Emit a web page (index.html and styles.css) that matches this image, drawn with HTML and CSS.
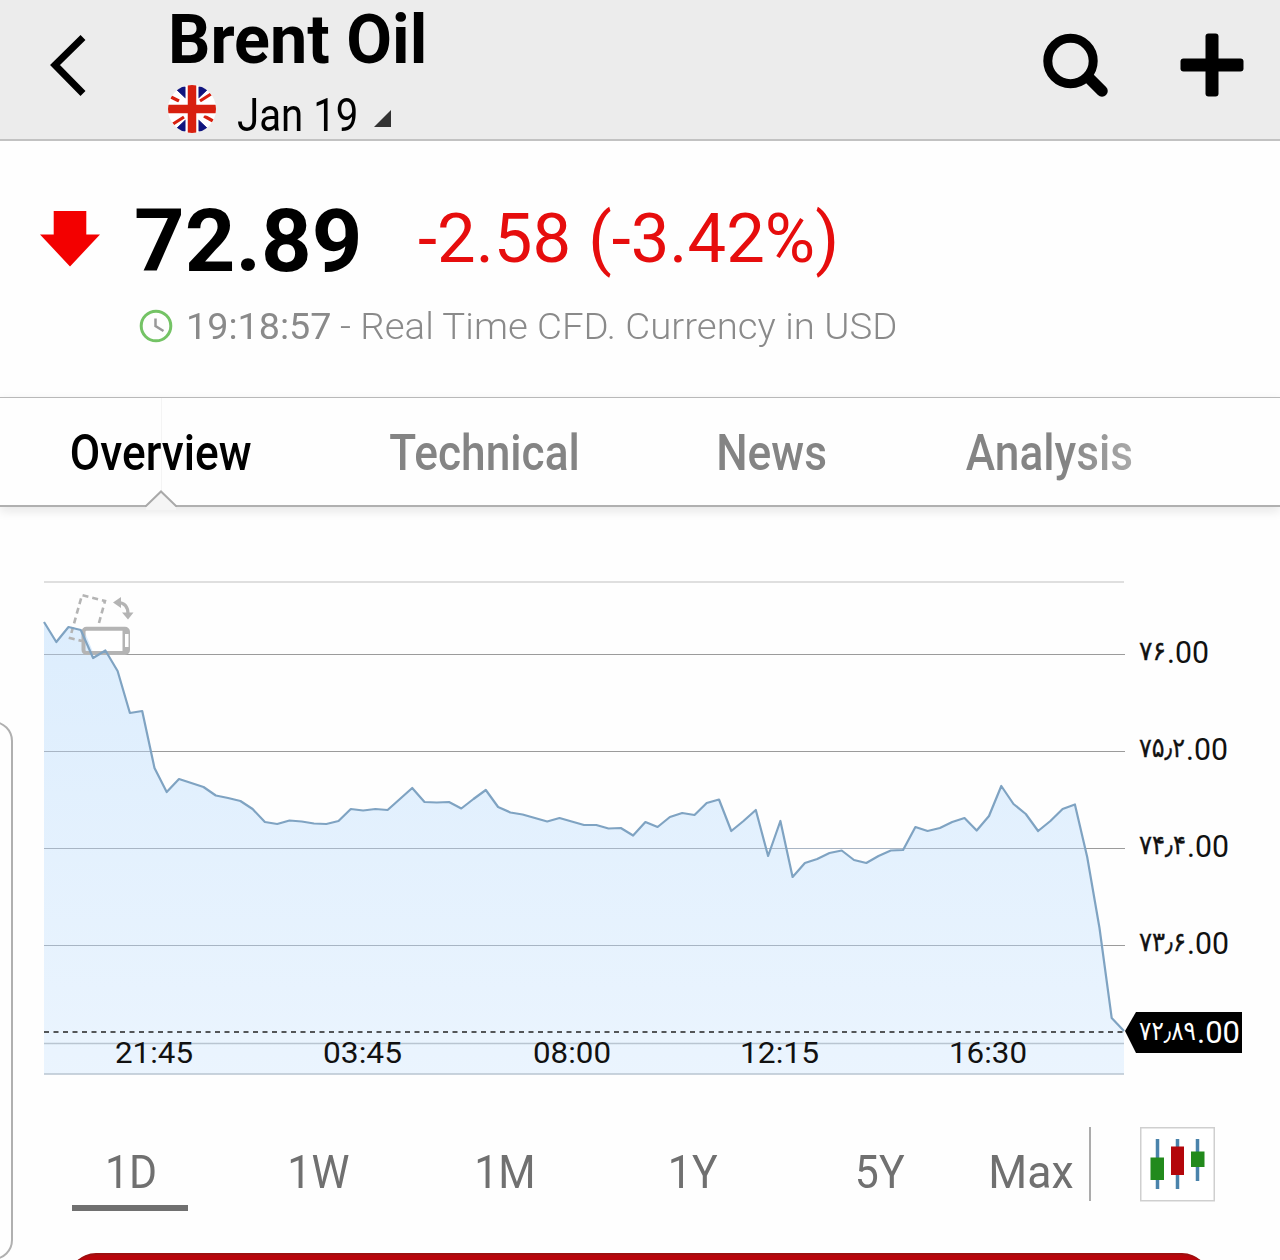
FILE: index.html
```html
<!DOCTYPE html>
<html lang="en">
<head>
    <meta charset="UTF-8">
    <meta name="viewport" content="width=device-width, initial-scale=1.0">
    <title>Brent Oil</title>
    <link rel="stylesheet" href="styles.css">
</head>
<body>
    <header class="topbar">
        <svg class="back" width="40" height="64" viewBox="0 0 40 64">
            <path d="M34 4.5 L6 32 L34 60.5" fill="none" stroke="#000" stroke-width="7"/>
        </svg>
        <div class="title">
            <h1><span class="name">Brent Oil</span></h1>
            <div class="contract">
                <svg class="flag" width="48" height="48" viewBox="0 0 48 48">
                    <clipPath id="round"><circle cx="24" cy="24" r="24"/></clipPath>
                    <g clip-path="url(#round)">
                        <rect width="48" height="48" fill="#fff"/>
                        <path d="M6 2 H17.5 V13 Z M42 2 H30.5 V13 Z M6 46 H17.5 V35 Z M42 46 H30.5 V35 Z" fill="#10157e" stroke="#10157e"/>
                        <path d="M3 12 L11 16 M45 36 L36 31 M43 9 L32 16 M5 39 L16 32" stroke="#d8200f" stroke-width="3.2"/>
                        <path d="M24 0 V48 M0 24 H48" stroke="#fff" stroke-width="13"/>
                        <path d="M24 0 V48 M0 24 H48" stroke="#d8200f" stroke-width="8.5"/>
                    </g>
                </svg>
                <span class="month">Jan 19</span>
                <svg class="corner" width="17" height="17" viewBox="0 0 17 17"><path d="M17 0 V17 H0 Z" fill="#333"/></svg>
            </div>
        </div>
        <svg class="search" width="66" height="66" viewBox="0 0 66 66">
            <circle cx="27.5" cy="28" r="22.7" fill="none" stroke="#000" stroke-width="9"/>
            <path d="M46 45 L59 58" stroke="#000" stroke-width="11.5" stroke-linecap="round"/>
        </svg>
        <svg class="plus" width="64" height="64" viewBox="0 0 64 64">
            <rect x="25.5" y="0.5" width="13" height="63" rx="3"/>
            <rect x="0.5" y="25.5" width="63" height="13" rx="3"/>
        </svg>
    </header>

    <section class="quote">
        <div class="price-row">
            <svg class="arrow" width="60" height="56" viewBox="0 0 60 56"><path d="M13.7 0 H46.3 V23.5 H60 L30 55.5 L0 23.5 H13.7 Z" fill="#f30000"/></svg>
            <span class="price">72.89</span>
            <span class="change">-2.58 (-3.42%)</span>
        </div>
        <div class="info-row">
            <svg class="clock" width="34" height="34" viewBox="0 0 34 34">
                <circle cx="17" cy="17" r="14.8" fill="none" stroke="#74c365" stroke-width="3"/>
                <path d="M16.5 9.5 V17 L24.5 22" fill="none" stroke="#999" stroke-width="2.5"/>
            </svg>
            <span class="time">19:18:57</span>
            <span class="note">- Real Time CFD. Currency in USD</span>
        </div>
    </section>

    <nav class="tabs">
        <a class="tab overview active"><span>Overview</span></a>
        <a class="tab technical"><span>Technical</span></a>
        <a class="tab news"><span>News</span></a>
        <a class="tab analysis"><span>Analysis</span></a>
        <svg class="notch" width="32" height="20" viewBox="0 0 32 20">
            <path d="M1 16 L16 1.5 L31 16 V20 H1 Z" fill="#f5f5f5"/>
            <path d="M0 16 H1 L16 1.5 L31 16 H32" fill="none" stroke="#a9a9a9" stroke-width="2"/>
        </svg>
    </nav>

    <svg class="chart" width="1280" height="540" viewBox="0 560 1280 540">
        <defs>
            <linearGradient id="fill" x1="0" y1="620" x2="0" y2="1074" gradientUnits="userSpaceOnUse">
                <stop offset="0" stop-color="#d8ebfd"/>
                <stop offset="1" stop-color="#e8f3fe"/>
            </linearGradient>
        </defs>
        <path d="M44 582 H1124" stroke="#d4d4d4" stroke-width="1.5"/>
        <path class="grid" d="M44 654.5 H1125 M44 751.5 H1125 M44 848.5 H1125 M44 945.5 H1125"/>
        <path id="area" fill="url(#fill)" fill-opacity="0.88"/>
        <path d="M44 654.5 H106 M44 751.5 H151 M44 848.5 H1086 M44 945.5 H1104" stroke="#a8b5c4"/>
        <g fill="none" stroke="#b4b4b4">
            <path d="M99 623 L105 601 L82 595 L70 638 L82 641" stroke-width="2.6" stroke-dasharray="6 4"/>
            <path d="M86 630 H122 V651 H86 Z" fill="#fff" stroke="none"/>
            <path d="M84 630 L93 652 H84 Z" fill="#dbecfd" stroke="none"/>
            <rect x="83.5" y="628.8" width="44.5" height="24.2" rx="3" stroke-width="4"/>
            <path d="M125 629 V653" stroke-width="5"/>
            <rect x="125" y="634" width="3.5" height="13" fill="#fff" stroke="none"/>
            <path d="M118 602.5 Q128 603 128 614" stroke-width="3.2"/>
            <path d="M113 602.5 L121 597 V608 Z M128 619.5 L122 612.5 H133.5 Z" fill="#b4b4b4" stroke="none"/>
        </g>
        <path id="line" fill="none" stroke="#7fa3c2" stroke-width="2.2" stroke-linejoin="round"/>
        <path d="M44 1043.5 H1124 M44 1074 H1124" stroke="#b9c5d1" stroke-width="1.5"/>
        <path d="M44 1032 H1124" stroke="#222" stroke-width="1.6" stroke-dasharray="5 4.5"/>
        <g class="axis">
            <text x="115" y="1063" textLength="78" lengthAdjust="spacingAndGlyphs">21:45</text>
            <text x="323" y="1063" textLength="79" lengthAdjust="spacingAndGlyphs">03:45</text>
            <text x="533" y="1063" textLength="78" lengthAdjust="spacingAndGlyphs">08:00</text>
            <text x="740" y="1063" textLength="79" lengthAdjust="spacingAndGlyphs">12:15</text>
            <text x="949" y="1063" textLength="78" lengthAdjust="spacingAndGlyphs">16:30</text>
        </g>
        <g class="axis prices">
            <text class="fa" x="1139" y="660" textLength="27" lengthAdjust="spacingAndGlyphs">۷۶</text>
            <text x="1167" y="663" textLength="42" lengthAdjust="spacingAndGlyphs">.00</text>
            <text class="fa" x="1139" y="757" textLength="46" lengthAdjust="spacingAndGlyphs">۷۵٫۲</text>
            <text x="1186" y="760" textLength="42" lengthAdjust="spacingAndGlyphs">.00</text>
            <text class="fa" x="1139" y="854" textLength="47" lengthAdjust="spacingAndGlyphs">۷۴٫۴</text>
            <text x="1187" y="857" textLength="42" lengthAdjust="spacingAndGlyphs">.00</text>
            <text class="fa" x="1139" y="951" textLength="47" lengthAdjust="spacingAndGlyphs">۷۳٫۶</text>
            <text x="1187" y="954" textLength="42" lengthAdjust="spacingAndGlyphs">.00</text>
        </g>
        <path d="M1125 1031 L1136 1012 H1242 V1053 H1136 Z"/>
        <g class="axis prices last">
            <text class="fa" x="1139" y="1040" textLength="57" lengthAdjust="spacingAndGlyphs">۷۲٫۸۹</text>
            <text x="1197" y="1043" textLength="43" lengthAdjust="spacingAndGlyphs">.00</text>
        </g>
    </svg>

    <div class="ranges">
        <a class="range selected"><span>1D</span></a>
        <a class="range"><span>1W</span></a>
        <a class="range"><span>1M</span></a>
        <a class="range"><span>1Y</span></a>
        <a class="range"><span>5Y</span></a>
        <a class="range max"><span>Max</span></a>
        <div class="divider"></div>
        <svg class="candles" width="75" height="75" viewBox="0 0 75 75">
            <rect x="0.75" y="0.75" width="73.5" height="73" fill="#fff" stroke="#cfcfcf" stroke-width="1.5"/>
            <path d="M17.5 12 V62 M37.5 12 V62 M57.5 12 V54" stroke="#4a83ab" stroke-width="3.5"/>
            <rect x="10.5" y="30.5" width="13.5" height="22.5" fill="#228a1c"/>
            <rect x="31" y="19.5" width="13" height="28.5" fill="#b3060b"/>
            <rect x="51" y="24.5" width="13.5" height="15.5" fill="#228a1c"/>
        </svg>
    </div>
    <div class="banner"></div>
    <div class="drawer"></div>

    <script>
        const prices = [622, 642, 627, 630, 658, 650.5, 671, 713, 711, 768, 792, 779, 783, 787, 795.5, 798, 801,
            809, 822, 824, 820.5, 821.5, 823.5, 824, 821, 809, 810.5, 809, 810, 799, 788, 802, 802.5, 802, 808.5,
            799, 790, 807, 812.5, 814.5, 818, 821.5, 818, 821.5, 825, 825, 828.5, 828, 835.5, 822, 827, 817, 813,
            815, 803, 799.5, 831, 821, 810, 856, 821, 877, 863, 859, 853, 850.5, 860, 863, 856, 850.5, 850, 827,
            831, 828, 822, 818, 830.5, 816, 786, 804, 814, 831, 821, 809, 804.5, 857, 928, 1018, 1031];
        const step = 1080 / (prices.length - 1);
        const line = "M" + prices.map((y, i) => (44 + i * step).toFixed(1) + " " + y).join(" L");
        document.getElementById("line").setAttribute("d", line);
        document.getElementById("area").setAttribute("d", line + " V1074 H44 Z");
    </script>
</body>
</html>
```
FILE: styles.css
```css
    * {
        box-sizing: border-box;
    }
    body {
        font-family: Roboto, sans-serif;
        margin: 0;
        height: 1260px;
        position: relative;
        overflow: hidden;
        background-color: #fefefe;
        color: #000;
    }
    span {
        display: inline-block;
        white-space: nowrap;
        transform-origin: left;
    }
    .topbar {
        display: flex;
        height: 141px;
        padding-left: 49px;
        background-color: #ececec;
        border-bottom: 2px solid #c2c2c2;
    }
    .back {
        margin-top: 33px;
    }
    .title {
        width: 875px;
        margin-left: 79px;
    }
    h1 {
        margin: 0;
        font-size: 68.5px;
        line-height: 80px;
        height: 80px;
    }
    .name {
        margin-left: 0;
        transform: scaleX(0.97);
    }
    .contract {
        display: flex;
    }
    .flag {
        margin-top: 5px;
    }
    .month {
        width: 122px;
        margin: 11px 15px 0 21px;
        font-size: 47px;
        line-height: 48px;
        transform: scaleX(0.855);
    }
    .corner {
        margin-top: 30px;
    }
    .search {
        margin-top: 33px;
    }
    .plus {
        margin: 33px 0 0 71px;
    }
    .quote {
        height: 256px;
        padding: 45px 0 0 40px;
    }
    .price-row {
        display: flex;
        height: 110px;
        line-height: 110px;
    }
    .arrow {
        margin-top: 25px;
    }
    .price {
        width: 284px;
        margin-left: 34px;
        font-size: 88px;
        font-weight: bold;
        transform: scaleX(1.004);
    }
    .change {
        margin-top: -2px;
        font-size: 68.5px;
        color: #e60d0d;
        transform: scaleX(1.004);
    }
    .info-row {
        display: flex;
        margin-top: 7px;
        padding-left: 99px;
        font-size: 37px;
        line-height: 48px;
        color: #8a8a8a;
    }
    .clock {
        margin-top: 6px;
    }
    .time {
        width: 154px;
        margin-left: 13px;
        font-weight: 450;
        transform: scaleX(1.02);
    }
    .note {
        font-weight: 300;
        transform: scaleX(1.037);
    }
    .tabs {
        display: flex;
        position: relative;
        height: 110px;
        border-top: 1px solid #b9b9b9;
        border-bottom: 2px solid #b0b0b0;
        box-shadow: 0 4px 10px #e6e6e6;
        font-size: 50px;
        font-weight: 500;
        line-height: 110px;
        color: #848484;
    }
    .tab {
        text-align: center;
    }
    .tab span {
        transform-origin: center;
        transform: scaleX(0.885);
    }
    .overview {
        width: 321px;
    }
    .technical {
        width: 327px;
    }
    .news {
        width: 248px;
    }
    .analysis {
        width: 306px;
    }
    .analysis span {
        color: transparent;
        background: linear-gradient(to right, #848484 60%, #aaa);
        background-clip: text;
    }
    .active {
        color: #000;
        background: linear-gradient(#f4f4f4, #f4f4f4) 161px 0 / 1px 93px no-repeat;
    }
    .notch {
        position: absolute;
        left: 145px;
        bottom: -5px;
    }
    .chart {
        display: block;
        margin-top: 53px;
    }
    .grid {
        stroke: #9b9b9b;
    }
    .axis {
        font-size: 30px;
        fill: #111;
    }
    .prices {
        font-size: 31px;
    }
    .fa {
        font-family: "DejaVu Sans", sans-serif;
        font-size: 27px;
        stroke: #111;
        stroke-width: 0.4px;
    }
    .last, .last .fa {
        fill: #fff;
        stroke: none;
    }
    .ranges {
        display: flex;
        height: 153px;
        padding: 27px 0 0 38px;
        font-size: 46px;
        line-height: 66px;
        color: #707070;
    }
    .range {
        width: 187px;
        height: 84px;
        padding-top: 12px;
        text-align: center;
    }
    .range span {
        transform-origin: center;
        transform: scaleX(0.93);
    }
    .max {
        width: 116px;
    }
    .max span {
        transform: scaleX(0.97);
    }
    .selected {
        width: 116px;
        margin: 0 37px 0 34px;
        padding-left: 2px;
        border-bottom: 6px solid #707070;
    }
    .divider {
        width: 2px;
        height: 74px;
        background-color: #ababab;
    }
    .candles {
        margin-left: 49px;
    }
    .banner {
        height: 60px;
        margin: 0 70px 0 68px;
        border-top: 2px solid #9c1010;
        border-radius: 28px;
        background-color: #b8050b;
    }
    .drawer {
        position: absolute;
        left: -40px;
        top: 721px;
        width: 53px;
        height: 539px;
        border: 2px solid #b0b0b0;
        border-radius: 20px;
    }
```
